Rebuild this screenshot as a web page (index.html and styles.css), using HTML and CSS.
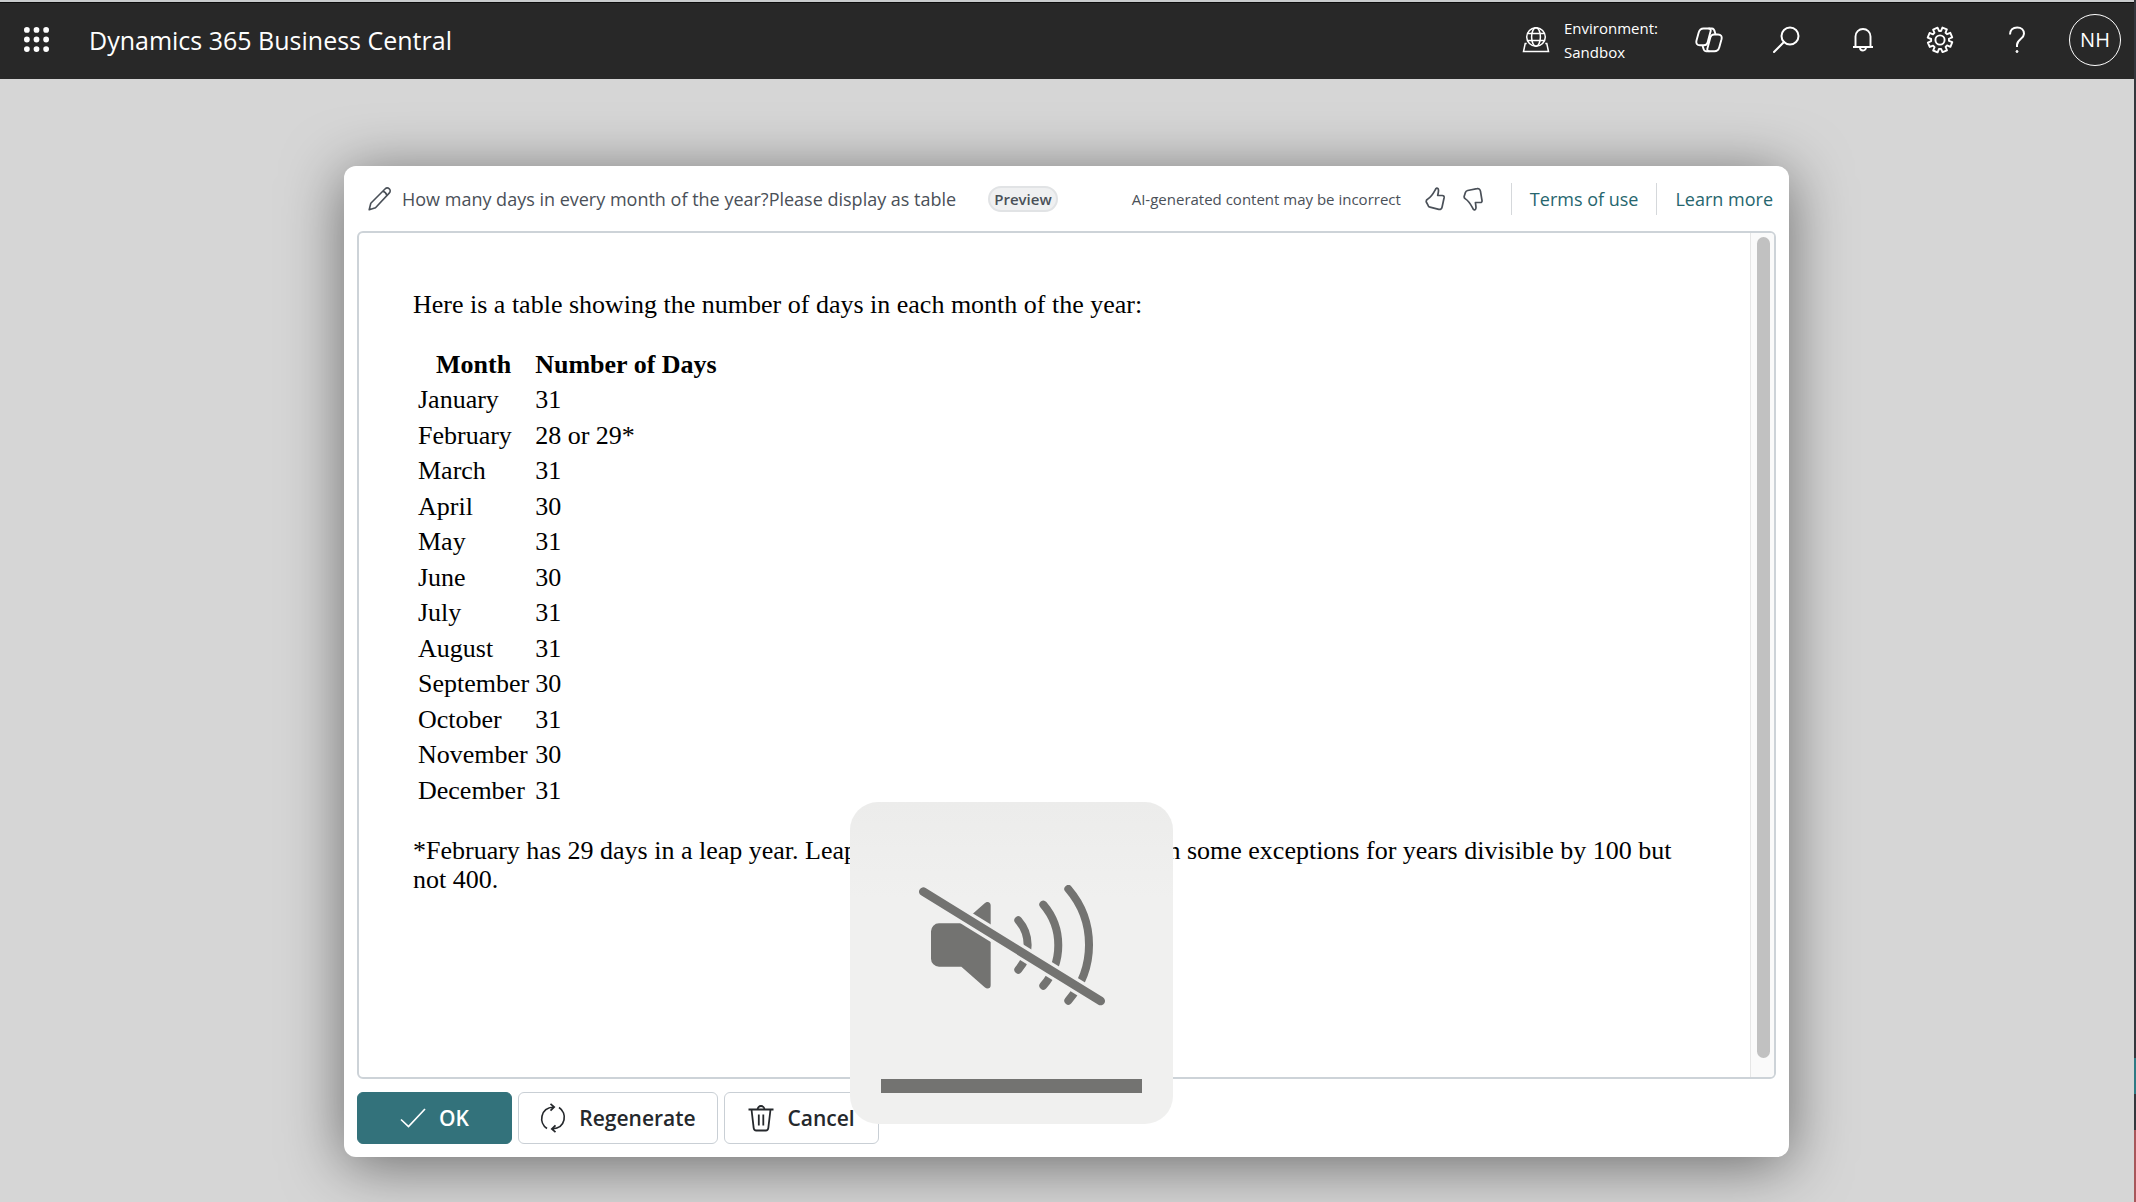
FILE: index.html
```html
<!DOCTYPE html>
<html lang="en">
<head>
<meta charset="utf-8">
<title>Dynamics 365 Business Central</title>
<link rel="stylesheet" href="styles.css">
</head>
<body>
<div class="screen">
  <header class="topbar">
    <button class="icon-btn launcher" aria-label="App launcher">
      <svg width="25" height="25" viewBox="0 0 26 26" fill="#fff"><circle cx="3" cy="3" r="3"/><circle cx="13" cy="3" r="3"/><circle cx="23" cy="3" r="3"/><circle cx="3" cy="13" r="3"/><circle cx="13" cy="13" r="3"/><circle cx="23" cy="13" r="3"/><circle cx="3" cy="23" r="3"/><circle cx="13" cy="23" r="3"/><circle cx="23" cy="23" r="3"/></svg>
    </button>
    <a class="brand" href="#">Dynamics 365 Business Central</a>
    <div class="environment">
      <svg width="28" height="26" viewBox="0 0 28 26" fill="none" stroke="#fff" stroke-width="1.5"><circle cx="14" cy="10" r="9.3"/><ellipse cx="14" cy="10" rx="4.4" ry="9.3"/><path d="M5.5 6.6h17M5.5 13.4h17M4.7 16.5H3.200L1.500 24.500h25l-1.700-8h-1.500"/></svg>
      <div class="environment-text"><span>Environment:</span><span>Sandbox</span></div>
    </div>
    <nav class="tools">
      <button class="icon-btn" aria-label="Copilot">
        <svg width="28" height="26" viewBox="0 0 28 26" fill="none" stroke="#fff" stroke-width="1.900" stroke-linejoin="round"><path d="M8.500 1.500H13.500C15.300 1.500 16 2.800 15.600 4.300L12.600 15.500C12.100 17.300 10.800 18.300 9 18.300H5C2 18.300.8 16.500 1.500 13.500L3.700 5.500C4.400 3 6 1.500 8.500 1.500z"/><path d="M19.500 24.300H14.500C12.700 24.300 12 23 12.400 21.500L15.400 10.300C15.900 8.500 17.200 7.500 19 7.500H23C26 7.500 27.200 9.300 26.500 12.300L24.300 20.300C23.600 22.800 22 24.300 19.500 24.300z"/><path d="M13.500 1.500H17C19.800 1.500 19.700 5 20.500 7.500M14.500 24.300H11C8.200 24.300 8.300 20.800 7.500 18.300"/></svg>
      </button>
      <button class="icon-btn" aria-label="Search">
        <svg width="28" height="28" viewBox="0 0 28 28" fill="none" stroke="#fff" stroke-width="2" stroke-linecap="round"><circle cx="18" cy="10" r="8.500"/><path d="M12 16L2 26"/></svg>
      </button>
      <button class="icon-btn" aria-label="Notifications">
        <svg width="22" height="26" viewBox="0 0 22 26" fill="none" stroke="#fff" stroke-width="1.900" stroke-linejoin="round"><path d="M3.500 19.800V9.500a7.500 7.500 0 0 1 15 0v10.300M1 20h20M8 20.500a3 3 0 0 0 6 0"/></svg>
      </button>
      <button class="icon-btn" aria-label="Settings">
        <svg width="28" height="28" viewBox="0 0 28 28" fill="none" stroke="#fff" stroke-width="1.900" stroke-linejoin="round"><path d="M11.600 5.200V1.600h4.800v3.600l1.900.8 2.600-2.500 3.400 3.400-2.500 2.600.8 1.900h3.600v5h-3.600l-.8 1.900 2.500 2.600-3.400 3.400-2.600-2.500-1.900.8v3.700h-4.800v-3.700l-1.900-.8-2.600 2.500-3.400-3.400 2.500-2.600-.8-1.900H1.700v-5h3.700l.8-1.900-2.500-2.600 3.400-3.400L9.700 6z" transform="rotate(22 14 14)"/><circle cx="14" cy="14" r="4.600"/></svg>
      </button>
      <button class="icon-btn" aria-label="Help">
        <svg width="18" height="28" viewBox="0 0 18 28" fill="none" stroke="#fff" stroke-width="2"><path d="M2 8.500C2 4 5 1.500 9.200 1.500S16 4 16 7.700C16 13 9 13 9 19v2"/><circle cx="9" cy="25.500" r="1" fill="#fff" stroke-width="1"/></svg>
      </button>
      <button class="avatar">NH</button>
    </nav>
  </header>

  <main class="stage">
    <section class="dialog" role="dialog" aria-label="AI answer">
      <div class="dialog-head">
        <svg width="24" height="24" viewBox="0 0 24 24" fill="none" stroke="#4a5058" stroke-width="1.600" stroke-linejoin="round"><path d="M1.200 22.800l1.600-6.600L17 2c1.400-1.400 3.200-1.200 4.300-.2 1.200 1.200 1.200 3-.1 4.300L7.500 20.800zM14.800 4.200c1.800.4 3.400 2 4 4"/></svg>
        <h1 class="prompt">How many days in every month of the year?Please display as table</h1>
        <span class="badge">Preview</span>
        <div class="head-right">
          <span class="notice">AI-generated content may be incorrect</span>
          <div class="votes">
            <button aria-label="Like"><svg width="20" height="24" viewBox="0 0 20 24" fill="none" stroke="#4a5058" stroke-width="1.700" stroke-linejoin="round"><path d="M11 1.500c.8-.8 2.500-.2 2.500 1.800 0 2-.5 3.700-.8 5.200h4.600c1.400 0 2 .9 1.800 2.200l-2 9.300c-.4 2-1.600 2.700-3.300 2.300L5 20.200c-1.200-.3-1.700-.9-2-2L1.300 15c-.4-1.500.2-2.300 1.500-3C7 9.500 8.500 6 11 1.500z"/></svg></button>
            <button aria-label="Dislike"><svg width="20" height="24" viewBox="0 0 20 24" fill="none" stroke="#4a5058" stroke-width="1.700" stroke-linejoin="round"><path d="M10.500 22.500c.8.800 2.500.2 2.500-1.800 0-1.700-.4-3.400-.6-5.200h4.900c1.300 0 1.900-.8 1.700-2l-1.500-9.200c-.3-2-1.700-3-3.400-2.600L4.600 3.500c-1.300.3-1.900 1-2.200 2L1.200 9.300c-.3 1.200.1 1.900 1.200 2.600C6.500 14.500 8 18 10.500 22.500z"/></svg></button>
          </div>
          <a class="head-link" href="#">Terms of use</a>
          <a class="head-link" href="#">Learn more</a>
        </div>
      </div>

      <div class="answer">
        <div class="answer-body">
          <p>Here is a table showing the number of days in each month of the year:</p>
          <table>
            <thead><tr><th>Month</th><th>Number of Days</th></tr></thead>
            <tbody>
              <tr><td>January</td><td>31</td></tr>
              <tr><td>February</td><td>28 or 29*</td></tr>
              <tr><td>March</td><td>31</td></tr>
              <tr><td>April</td><td>30</td></tr>
              <tr><td>May</td><td>31</td></tr>
              <tr><td>June</td><td>30</td></tr>
              <tr><td>July</td><td>31</td></tr>
              <tr><td>August</td><td>31</td></tr>
              <tr><td>September</td><td>30</td></tr>
              <tr><td>October</td><td>31</td></tr>
              <tr><td>November</td><td>30</td></tr>
              <tr><td>December</td><td>31</td></tr>
            </tbody>
          </table>
          <p>*February has 29 days in a leap year. Leap years occur every 4 years with some exceptions for years divisible by 100 but not 400.</p>
        </div>
        <div class="scroll-track"><div class="scroll-thumb"></div></div>
      </div>

      <div class="actions">
        <button class="btn btn-primary"><svg width="26" height="20" viewBox="0 0 26 20" fill="none" stroke="#fff" stroke-width="1.700"><path d="M1 11.500l7.500 7L25 1"/></svg>OK</button>
        <button class="btn btn-wide"><svg width="26" height="30" viewBox="0 0 26 30" fill="none" stroke="#25282c" stroke-width="1.700"><path d="M7 25.500C-1.500 20 0 5 13.500 4M10.500.8L14.200 4l-3.700 3.700M19 4.500C27.500 10 26 25 12.500 26M15.500 29.200L11.800 26l3.700-3.700"/></svg>Regenerate</button>
        <button class="btn"><svg width="26" height="28" viewBox="0 0 26 28" fill="none" stroke="#25282c" stroke-width="1.800"><path d="M.5 5.500h25M9.500 5.500a3.500 3.500 0 0 1 7 0M3.500 5.500l2.200 18.700c.2 1.500 1 2.300 2.500 2.300h9.600c1.500 0 2.300-.8 2.500-2.300l2.200-18.700M10.800 10.500v11M15.300 10.500v11"/></svg>Cancel</button>
      </div>
    </section>
  </main>

  <div class="hud" role="status" aria-label="Volume muted">
    <svg class="hud-icon" viewBox="237 284 558 362" fill="none">
      <mask id="slash-gap" maskUnits="userSpaceOnUse" x="237" y="284" width="558" height="362">
        <path fill="#fff" d="M237 284h558v362H237z"/>
        <path d="M250 304L782 632" stroke="#000" stroke-width="45"/>
      </mask>
      <g mask="url(#slash-gap)">
        <path fill="#737371" d="M297 399h69l68-60c8-8 18-4 18 6v240c0 10-10 13-18 6l-70-62h-67a24 24 0 0 1-24-24v-82a24 24 0 0 1 24-24z"/>
        <path stroke="#737371" stroke-width="24" stroke-linecap="round" d="M535 390a112 112 0 0 1 0 148M610 343a187 187 0 0 1 0 243M685 296a257 257 0 0 1 0 335"/>
      </g>
      <path d="M250 304L782 632" stroke="#737371" stroke-width="26" stroke-linecap="round"/>
    </svg>
    <div class="hud-level"></div>
  </div>
  <div class="edge"></div>
</div>
</body>
</html>
```
FILE: styles.css
```css
* { box-sizing: border-box; }
body { margin: 0; font-family: "Open Sans", "Noto Sans", sans-serif; background: #d6d6d6; }
button { font: inherit; color: inherit; background: none; border: 0; padding: 0; }
a { text-decoration: none; }
svg { display: block; flex: none; }
.screen { position: relative; min-height: 100vh; display: flex; flex-direction: column; }

.topbar { height: 79px; display: flex; align-items: center; padding: 0 15px 2px 24px; background: #282828; color: #fff; border-top: 2px solid #c9cccd; box-shadow: inset 0 1px #0c0c0c; }
.brand { margin-left: 40px; font-size: 25px; color: #fff; }
.environment { margin: 0 12px 0 auto; display: flex; align-items: center; gap: 14px; }
.environment-text { display: flex; flex-direction: column; font-size: 15px; line-height: 24px; }
.tools { display: flex; align-items: center; }
.icon-btn { display: flex; justify-content: center; }
.tools .icon-btn { width: 77px; }
.avatar { width: 52px; height: 52px; margin-left: 14px; border: 1px solid #fff; border-radius: 50%; font-size: 20px; }

.stage { flex: 1; display: flex; padding: 87px 347px 45px 344px; }
.dialog { flex: 1; display: flex; flex-direction: column; padding: 0 13px; background: #fff; border-radius: 12px; box-shadow: 0 8px 60px rgba(0, 0, 0, .5); }
.dialog-head { height: 65px; display: flex; align-items: center; padding: 0 3px 0 11px; color: #4a5058; }
.prompt { margin: 0 0 0 10px; font-size: 18px; font-weight: 400; }
.badge { margin-left: 32px; padding: 0 4px; font-size: 15px; font-weight: 600; line-height: 22px; border: 2px solid #e1e3e5; border-radius: 13px; background: #eff0f1; }
.head-right { margin-left: auto; display: flex; align-items: center; }
.notice { font-size: 15px; }
.votes { display: flex; gap: 18px; margin: 0 10px 0 24px; }
.head-link { padding-left: 18px; margin-left: 18px; border-left: 1px solid #d5d8db; font-size: 18px; line-height: 32px; color: #26666e; }

.answer { flex: 1; display: flex; border: 2px solid #cdd3d8; border-radius: 6px; overflow: hidden; }
.answer-body { flex: 1; padding: 57px 54px 0; font: 26px/29px "Liberation Serif", serif; color: #000; }
.answer-body p { margin: 0 0 26px; }
.answer-body table { height: 464px; margin: 27px 0 26px; border-spacing: 3px; line-height: 28px; }
.answer-body th, .answer-body td { padding: 2px 1px 2px 2px; }
.scroll-track { width: 24px; padding: 4px 4px 19px 6px; border-left: 1px solid #e6e6e6; background: #fafafa; display: flex; }
.scroll-thumb { flex: 1; border-radius: 7px; background: #c1c1c1; }

.actions { display: flex; gap: 6px; padding: 13px 0; }
.btn { min-width: 155px; height: 52px; display: flex; align-items: center; justify-content: center; gap: 13px; border: 1px solid #c9cfd5; border-radius: 6px; font-size: 21px; font-weight: 600; color: #25282c; }
.btn-wide { min-width: 200px; }
.btn-primary { background: #33727b; border-color: #33727b; color: #fff; }

/* System volume overlay floating over the page */
.hud { position: absolute; left: 850px; top: 802px; width: 323px; height: 322px; display: flex; flex-direction: column; justify-content: space-between; padding: 83px 31px 31px; border-radius: 28px; background: linear-gradient(#ececeb, #f0f0ef 30%); }
.hud-icon { width: 186px; margin-left: 38px; }
.hud-level { height: 14px; background: #737371; }

/* Sliver of the window behind */
.edge { position: absolute; right: 0; top: 0; bottom: 0; width: 2px; background: linear-gradient(#34373d 88%, #2e7a84 88% 91%, #34373d 91% 94%, #a8565a 94%); }
```
